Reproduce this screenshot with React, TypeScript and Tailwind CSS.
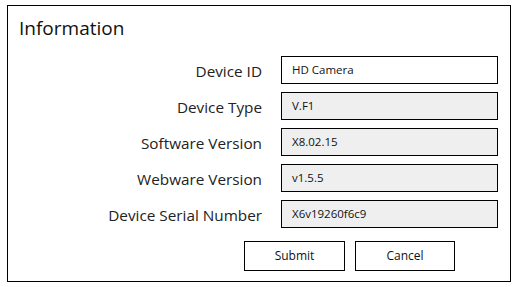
import React from "react";

const rows: { label: string; value: string; editable?: boolean }[] = [
  { label: "Device ID", value: "HD Camera", editable: true },
  { label: "Device Type", value: "V.F1" },
  { label: "Software Version", value: "X8.02.15" },
  { label: "Webware Version", value: "v1.5.5" },
  { label: "Device Serial Number", value: "X6v19260f6c9" },
];

export default function App() {
  return (
    <div className="w-[517px] h-[287px] bg-white pt-[5px] pl-[7px]" style={{ fontFamily: '"Open Sans", "Noto Sans", sans-serif' }}>
      <div className="w-[504px] h-[277px] border-[1.5px] border-black flex flex-col">
        <div className="pl-[11px] pt-[9px] text-[19px] leading-[26px] text-[#111]">Information</div>
        <div className="flex flex-col gap-[8px] mt-[15px]">
          {rows.map((r) => (
            <div key={r.label} className="flex items-center h-[28px]">
              <div className="w-[254px] text-right text-[15.3px] text-[#222] pt-[3px]">{r.label}</div>
              <div
                className={`ml-[19px] w-[217px] h-[28px] border-[1.5px] border-black flex items-center pl-[10px] text-[11.5px] font-medium text-[#111] ${r.editable ? "bg-white" : "bg-[#efefef]"}`}
              >
                {r.value}
              </div>
            </div>
          ))}
        </div>
        <div className="flex gap-[10px] mt-[13px] pl-[236px]">
          <div className="w-[101px] h-[30px] border-[1.5px] border-black flex items-center justify-center text-[12px] font-medium text-[#111]">Submit</div>
          <div className="w-[100px] h-[30px] border-[1.5px] border-black flex items-center justify-center text-[12px] font-medium text-[#111]">Cancel</div>
        </div>
      </div>
    </div>
  );
}
